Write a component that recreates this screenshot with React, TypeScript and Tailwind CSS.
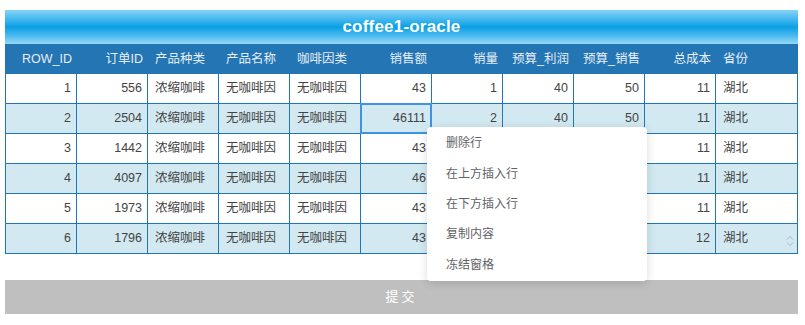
import React from "react";

const cols = [
  { name: "ROW_ID", w: 72, align: "right" },
  { name: "订单ID", w: 71, align: "right" },
  { name: "产品种类", w: 71, align: "left" },
  { name: "产品名称", w: 71, align: "left" },
  { name: "咖啡因类", w: 71, align: "left" },
  { name: "销售额", w: 71, align: "right" },
  { name: "销量", w: 71, align: "right" },
  { name: "预算_利润", w: 71, align: "right" },
  { name: "预算_销售", w: 71, align: "right" },
  { name: "总成本", w: 71, align: "right" },
  { name: "省份", w: 82, align: "left" },
];

const rows = [
  ["1", "556", "浓缩咖啡", "无咖啡因", "无咖啡因", "43", "1", "40", "50", "11", "湖北"],
  ["2", "2504", "浓缩咖啡", "无咖啡因", "无咖啡因", "46111", "2", "40", "50", "11", "湖北"],
  ["3", "1442", "浓缩咖啡", "无咖啡因", "无咖啡因", "43", "", "", "", "11", "湖北"],
  ["4", "4097", "浓缩咖啡", "无咖啡因", "无咖啡因", "46", "", "", "", "11", "湖北"],
  ["5", "1973", "浓缩咖啡", "无咖啡因", "无咖啡因", "43", "", "", "", "11", "湖北"],
  ["6", "1796", "浓缩咖啡", "无咖啡因", "无咖啡因", "43", "", "", "", "12", "湖北"],
];

const menu = ["删除行", "在上方插入行", "在下方插入行", "复制内容", "冻结窗格"];

export default function App() {
  return (
    <div
      className="relative w-[805px] h-[325px] bg-white"
      style={{ fontFamily: '"Liberation Sans", "Noto Sans CJK SC", sans-serif' }}
    >
      <div className="ml-[5px] pt-[10px] w-[793px]">
        <div className="h-[34px] flex items-center justify-center bg-[linear-gradient(to_bottom,#86d3f5_0%,#3db5ee_30%,#0a9fe6_50%,#4ab9ef_75%,#96d8f6_100%)]">
          <span className="text-white font-bold text-[17px] tracking-[0.2px]">coffee1-oracle</span>
        </div>
        <div className="flex h-[30px] bg-[#2475b4] text-[#e6eef6] text-[12.5px]">
          {cols.map((c, i) => (
            <div
              key={i}
              style={{ width: c.w }}
              className={`flex items-center whitespace-nowrap ${c.align === "right" ? "justify-end pr-[5px]" : "justify-start pl-[7px]"}`}
            >
              {c.name}
            </div>
          ))}
        </div>
        <div className="border-l border-r border-[#1f76bd]">
          {rows.map((r, ri) => (
            <div
              key={ri}
              className={`flex h-[30px] border-b border-[#1f76bd] text-[12.5px] text-[#444] ${ri % 2 === 1 ? "bg-[#d2e9f1]" : "bg-white"}`}
            >
              {r.map((v, ci) => {
                const c = cols[ci];
                const w = ci === 0 ? c.w - 1 : ci === cols.length - 1 ? c.w - 1 : c.w;
                const selected = ri === 1 && ci === 5;
                return (
                  <div
                    key={ci}
                    style={{ width: w }}
                    className={`relative flex items-center whitespace-nowrap ${ci < cols.length - 1 ? "border-r border-[#1f76bd]" : ""} ${c.align === "right" ? "justify-end pr-[5px]" : "justify-start pl-[7px]"}`}
                  >
                    {v}
                    {selected && (
                      <div className="absolute left-[-1px] top-[-1px] right-[-1px] bottom-[-1px] border-2 border-[#3d94e6]" />
                    )}
                    {ri === 5 && ci === 10 && (
                      <svg className="absolute right-[3px] top-[11px]" width="8" height="12" viewBox="0 0 8 12" fill="none" stroke="#b3b3b3" strokeWidth="1">
                        <path d="M1 4.5 L4 1.5 L7 4.5" />
                        <path d="M1 7.5 L4 10.5 L7 7.5" />
                      </svg>
                    )}
                  </div>
                );
              })}
            </div>
          ))}
        </div>
        <div className="mt-[26px] h-[34px] bg-[#bfbfbf] flex items-center justify-center text-white text-[13px] tracking-[3px]">
          提交
        </div>
      </div>
      <div className="absolute left-[427px] top-[127px] w-[220px] h-[154px] bg-white rounded-[4px] shadow-[0_2px_10px_rgba(0,0,0,0.15)] py-[1px]">
        {menu.map((m, i) => (
          <div key={i} className="h-[30.4px] flex items-center pl-[19px] text-[12px] text-[#606266]">
            {m}
          </div>
        ))}
      </div>
    </div>
  );
}
